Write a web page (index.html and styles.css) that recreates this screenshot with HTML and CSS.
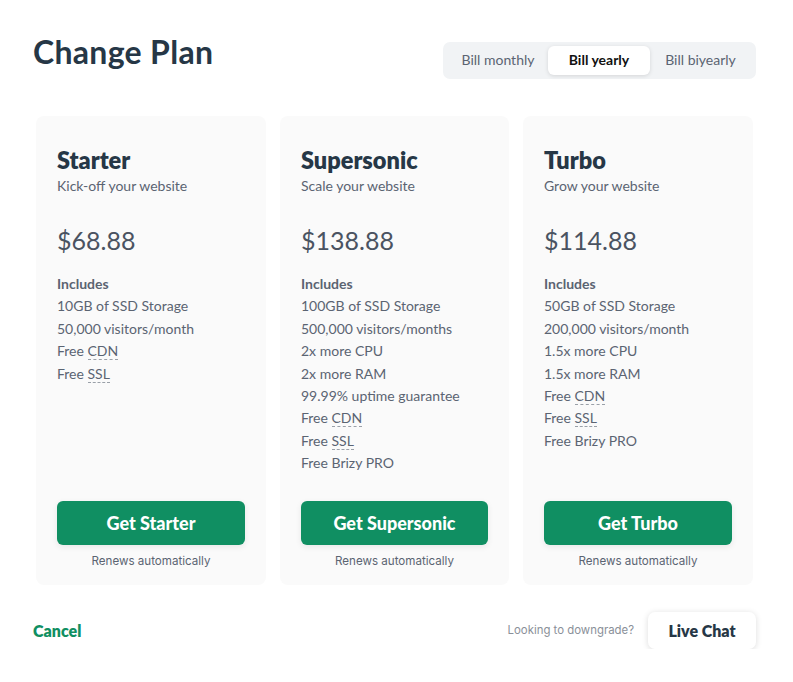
FILE: index.html
```html
<!DOCTYPE html>
<html>
<head>
<meta charset="utf-8">
<link rel="stylesheet" href="styles.css">
</head>
<body>
<div class="page">
  <header class="top">
    <h1 class="title">Change Plan</h1>
    <div class="toggle">
      <span class="opt">Bill monthly</span>
      <span class="opt active">Bill yearly</span>
      <span class="opt">Bill biyearly</span>
    </div>
  </header>

  <div class="cards">
    <div class="card">
      <h2 class="name">Starter</h2>
      <p class="sub">Kick-off your website</p>
      <p class="price">$68.88</p>
      <ul class="feats">
        <li class="inc">Includes</li>
        <li>10GB of SSD Storage</li>
        <li>50,000 visitors/month</li>
        <li>Free <span class="dot">CDN</span></li>
        <li>Free <span class="dot">SSL</span></li>
      </ul>
      <div class="foot">
        <button class="btn">Get Starter</button>
        <p class="renew">Renews automatically</p>
      </div>
    </div>
    <div class="card">
      <h2 class="name">Supersonic</h2>
      <p class="sub">Scale your website</p>
      <p class="price">$138.88</p>
      <ul class="feats">
        <li class="inc">Includes</li>
        <li>100GB of SSD Storage</li>
        <li>500,000 visitors/months</li>
        <li>2x more CPU</li>
        <li>2x more RAM</li>
        <li>99.99% uptime guarantee</li>
        <li>Free <span class="dot">CDN</span></li>
        <li>Free <span class="dot">SSL</span></li>
        <li>Free Brizy PRO</li>
      </ul>
      <div class="foot">
        <button class="btn">Get Supersonic</button>
        <p class="renew">Renews automatically</p>
      </div>
    </div>
    <div class="card">
      <h2 class="name">Turbo</h2>
      <p class="sub">Grow your website</p>
      <p class="price">$114.88</p>
      <ul class="feats">
        <li class="inc">Includes</li>
        <li>50GB of SSD Storage</li>
        <li>200,000 visitors/month</li>
        <li>1.5x more CPU</li>
        <li>1.5x more RAM</li>
        <li>Free <span class="dot">CDN</span></li>
        <li>Free <span class="dot">SSL</span></li>
        <li>Free Brizy PRO</li>
      </ul>
      <div class="foot">
        <button class="btn">Get Turbo</button>
        <p class="renew">Renews automatically</p>
      </div>
    </div>
  </div>

  <footer class="bottom">
    <a class="cancel">Cancel</a>
    <div class="right">
      <span class="down">Looking to downgrade?</span>
      <button class="chat">Live Chat</button>
    </div>
  </footer>
</div>
</body>
</html>
```

FILE: styles.css
```css
* { box-sizing: border-box; }
html, body { margin: 0; padding: 0; background: #fff; }
body { font-family: Lato, "Open Sans", sans-serif; color: #5b6472; }
.page { padding: 33px 37px 0 33px; width: 793px; }
.top { display: flex; justify-content: space-between; align-items: flex-start; }
.title { margin: 0; font-size: 32px; line-height: 38px; font-weight: 700; color: #263746; letter-spacing: 0.3px; }
.toggle { display: grid; grid-template-columns: 100px 102px 101px; align-items: center; background: #f1f3f5; border-radius: 7px; padding: 4px 5px; margin-top: 9px; height: 37px; }
.opt { font-size: 14px; color: #5b6472; text-align: center; height: 29px; line-height: 27px; border-radius: 6px; }
.opt.active { background: #fff; color: #111; font-weight: 700; box-shadow: 0 1px 4px rgba(0,0,0,0.12); }
.cards { display: grid; grid-template-columns: 230px 229px 230px; gap: 14px; margin: 37px 0 0 3px; }
.card { background: #fafafa; border-radius: 8px; padding: 32px 21px 17px; display: flex; flex-direction: column; }
.name { margin: 0; font-size: 23.5px; line-height: 25px; font-weight: 800; color: #263746; }
.sub { margin: 4px 0 0; font-size: 14px; line-height: 18px; }
.price { margin: 31px 0 0; font-size: 25px; line-height: 28px; color: #4a5361; }
.feats { list-style: none; padding: 0; margin: 19px 0 0; font-size: 14px; line-height: 22.4px; }
.feats .inc { font-weight: 700; }
.dot { border-bottom: 1px dashed #9aa0a8; }
.foot { margin-top: auto; padding-top: 26px; }
.btn { display: block; width: 100%; height: 44px; border: 0; border-radius: 6px; background: #108f62; color: #fff; font-family: Lato, sans-serif; font-size: 18px; font-weight: 900; box-shadow: 0 2px 6px rgba(0,0,0,0.08); }
.renew { margin: 9px 0 0; text-align: center; font-family: Inter, sans-serif; font-size: 11.6px; line-height: 14px; color: #5b6472; }
.bottom { display: flex; justify-content: space-between; align-items: center; margin-top: 27px; }
.cancel { font-size: 16px; font-weight: 800; color: #108f62; }
.right { display: flex; align-items: center; gap: 14px; }
.down { font-family: Inter, sans-serif; font-size: 11.4px; color: #8a9099; }
.chat { height: 37px; width: 108px; padding: 0; border: 0; border-radius: 7px; background: #fff; font-family: Lato, sans-serif; font-size: 16px; font-weight: 800; color: #263746; box-shadow: 0 1px 6px rgba(0,0,0,0.14); }
```
